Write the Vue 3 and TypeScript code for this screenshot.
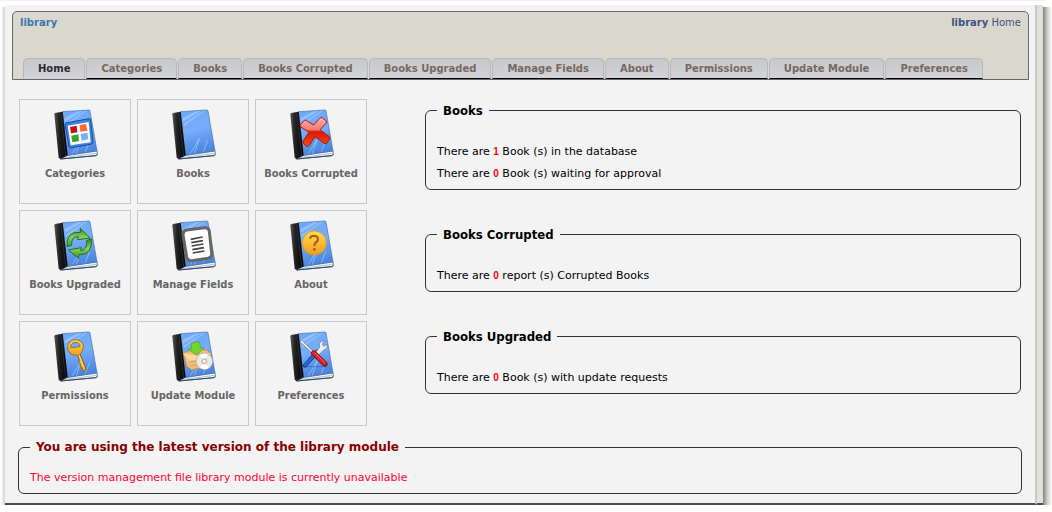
<script setup lang="ts">
interface ModuleItem {
  id: string
  label: string
}
interface StatLine {
  count: number
  text: string
}
interface StatBox {
  title: string
  lines: StatLine[]
}

const items: ModuleItem[] = [
  { id: 'categories', label: 'Categories' },
  { id: 'books', label: 'Books' },
  { id: 'corrupted', label: 'Books Corrupted' },
  { id: 'upgraded', label: 'Books Upgraded' },
  { id: 'fields', label: 'Manage Fields' },
  { id: 'about', label: 'About' },
  { id: 'permissions', label: 'Permissions' },
  { id: 'update', label: 'Update Module' },
  { id: 'preferences', label: 'Preferences' },
]

const tabs: ModuleItem[] = [{ id: 'home', label: 'Home' }, ...items]

const boxes: StatBox[] = [
  {
    title: 'Books',
    lines: [
      { count: 1, text: 'Book (s) in the database' },
      { count: 0, text: 'Book (s) waiting for approval' },
    ],
  },
  { title: 'Books Corrupted', lines: [{ count: 0, text: 'report (s) Corrupted Books' }] },
  { title: 'Books Upgraded', lines: [{ count: 0, text: 'Book (s) with update requests' }] },
]
</script>

<template>
  <div class="top-strip"></div>
  <div class="frame">
    <div class="edge-left"></div>
    <div class="page">
      <header class="head">
        <div class="crumbs">
          <a class="brand" href="#">library</a>
          <span class="trail"><b>library</b> <a href="#">Home</a></span>
        </div>
        <nav class="tabs">
          <a v-for="t in tabs" :key="t.id" href="#" class="tab" :class="{ current: t.id === 'home' }">{{ t.label }}</a>
        </nav>
      </header>

      <main class="main">
        <div class="columns">
          <div class="tiles">
            <a v-for="it in items" :key="it.id" class="tile" href="#">
              <svg class="icon" viewBox="0 0 144 156" aria-hidden="true">
                <defs>
                  <linearGradient :id="'cover-' + it.id" x1="0" y1="0" x2="0.2" y2="1">
                    <stop offset="0" stop-color="#6ba8f8" />
                    <stop offset="0.5" stop-color="#76adfb" />
                    <stop offset="1" stop-color="#4a86e0" />
                  </linearGradient>
                  <linearGradient :id="'spine-' + it.id" x1="0" y1="0" x2="1" y2="0">
                    <stop offset="0" stop-color="#555" />
                    <stop offset="0.35" stop-color="#222" />
                    <stop offset="1" stop-color="#000" />
                  </linearGradient>
                  <linearGradient :id="'mark-' + it.id" x1="0" y1="0" x2="0" y2="1">
                    <template v-if="it.id === 'corrupted'">
                      <stop offset="0" stop-color="#ffb4a8" />
                      <stop offset="0.42" stop-color="#f47a70" />
                      <stop offset="0.5" stop-color="#de1608" />
                      <stop offset="1" stop-color="#f0500c" />
                    </template>
                    <template v-else-if="it.id === 'upgraded'">
                      <stop offset="0" stop-color="#2f8a1c" />
                      <stop offset="0.5" stop-color="#8ccf60" />
                      <stop offset="1" stop-color="#35961f" />
                    </template>
                    <template v-else>
                      <stop offset="0" stop-color="#ffdc50" />
                      <stop offset="1" stop-color="#f39a1c" />
                    </template>
                  </linearGradient>
                </defs>
                <path d="M28 153L50 142L138 128L139 140Q138 143 134 143Z" fill="#f4f6f8" stroke="#445" stroke-width="2" />
                <path d="M40 149L136 136" stroke="#9aa" stroke-width="2" />
                <path d="M30 153L134 143L139 139" fill="none" stroke="#24477c" stroke-width="3" />
                <path d="M34 11L113 6Q117 6 117 9L138 129L49 142Z" :fill="'url(#cover-' + it.id + ')'" stroke="#4470ae" stroke-width="2" />
                <path d="M40 31L80 10L95 9L42 41ZM43 48L102 9L108 8L44 55Z" fill="#fff" opacity="0.25" />
                <path d="M64 137L91 92M76 136L91 92M103 131L116 97" fill="none" stroke="#d8eaff" stroke-width="2" opacity="0.65" />
                <path d="M12 15L35 11L50 142L28 153L23 149L10 19Z" :fill="'url(#spine-' + it.id + ')'" />
                <path d="M29 12L44 144" stroke="#3c3c3c" stroke-width="2" />

                <g v-if="it.id === 'categories'">
                  <path d="M45 45L114 32Q118 32 119 36L126 103Q126 107 122 108L59 120Q55 120 54 116L42 50Q42 46 45 45Z" fill="#3e82df" stroke="#164c9d" stroke-width="3" />
                  <path d="M50 53L113 42L119 103L59 112Z" fill="#f8fbff" />
                  <path d="M57 57L77 53L79 73L60 76Z" fill="#c50d0d" />
                  <path d="M86 51L105 48L109 68L88 71Z" fill="#fa6a30" />
                  <path d="M61 83L82 79L84 99L64 103Z" fill="#3ba626" />
                  <path d="M89 78L109 74L112 94L92 98Z" fill="#73b1f5" />
                </g>
                <g v-else-if="it.id === 'corrupted'">
                  <path d="M50 40Q52 34 58 37L80 51L98 31Q102 26 107 30L117 38Q120 42 117 46L99 65L127 86Q131 90 127 94L119 106Q115 109 111 106L84 86L67 112Q63 117 58 114L49 106Q46 102 49 98L66 73L42 57Q38 53 41 49Z" :fill="'url(#mark-' + it.id + ')'" stroke="#a51a12" stroke-width="3" />
                </g>
                <g v-else-if="it.id === 'upgraded'" :fill="'url(#mark-' + it.id + ')'" stroke="#236f17" stroke-width="3" stroke-linejoin="round">
                  <path d="M48 83Q45 36 88 40L88 28L117 57L80 62L82 53Q60 52 62 79Z" />
                  <path d="M121 59Q126 108 84 107L83 118L52 93L91 86L89 95Q110 93 107 65Z" />
                </g>
                <g v-else-if="it.id === 'fields'">
                  <path d="M53 33L106 26Q119 25 121 37L128 103Q129 116 117 118L68 125Q55 126 53 114L42 48Q41 36 53 33Z" fill="#fff" stroke="#666" stroke-width="9" />
                  <path d="M65 61L101 54M67 71L102 65M68 81L103 75M70 92L105 86M71 102L106 96" stroke="#444" stroke-width="5" />
                </g>
                <g v-else-if="it.id === 'about'">
                  <circle cx="82" cy="72" r="36" :fill="'url(#mark-' + it.id + ')'" stroke="#e29415" stroke-width="2" />
                  <path d="M69 59Q70 50 81 50Q93 51 93 61Q93 67 86 71Q82 74 82 81" fill="none" stroke="#a75a13" stroke-width="6" />
                  <circle cx="82" cy="91" r="4" fill="#a75a13" />
                </g>
                <g v-else-if="it.id === 'permissions'">
                  <path d="M79 70L85 67L105 117L101 124L94 119L92 111L87 108L88 101L83 97L85 91Z" fill="#f6b11c" stroke="#8d651c" stroke-width="3" />
                  <path fill-rule="evenodd" d="M73 29C88 29 98 40 97 52Q96 69 83 76L75 76Q51 74 50 52C50 39 60 30 73 29ZM73 37C63 38 57 45 59 53L87 50C88 41 81 37 73 37Z" :fill="'url(#mark-' + it.id + ')'" stroke="#95702c" stroke-width="3" />
                  <path d="M84 75L98 112" stroke="#ffe58b" stroke-width="3" />
                </g>
                <g v-else-if="it.id === 'update'">
                  <path d="M42 69L74 57L113 60L126 72L112 111L67 119L53 109Z" fill="#f2bd77" stroke="#c57a2d" stroke-width="2" />
                  <path d="M42 69L83 77L126 69L118 85L60 92Z" fill="#ffdaa1" />
                  <path d="M60 96L108 89M64 107L107 101" stroke="#dda363" stroke-width="3" />
                  <path d="M66 39L92 35L94 53L105 53L84 75L57 58L68 56Z" fill="#72d332" stroke="#48a426" stroke-width="2" />
                  <circle cx="106" cy="94" r="25" fill="#e8e9e8" stroke="#a6a6a6" stroke-width="2" />
                  <path d="M106 94L91 76Q104 67 116 73ZM106 94L119 114Q105 121 94 112Z" fill="#fff" />
                  <circle cx="106" cy="94" r="9" fill="#d1c1ae" />
                  <circle cx="106" cy="94" r="4" fill="#fff" />
                </g>
                <g v-else-if="it.id === 'preferences'" stroke-linecap="round">
                  <path d="M50 110L118 110" stroke="#2a62b8" stroke-width="2" />
                  <path d="M92 64L54 106" stroke="#133f88" stroke-width="13" />
                  <path d="M78 80L54 105" stroke="#286dd0" stroke-width="8" />
                  <path d="M82 71L98 52Q94 37 106 33L112 34L106 42L110 49L120 43Q124 55 109 61L91 79Z" fill="#e9edf0" stroke="#6d7580" stroke-width="2" />
                  <path d="M43 34L76 66" stroke="#69717a" stroke-width="8" />
                  <path d="M43 34L76 66" stroke="#f5f5f5" stroke-width="5" />
                  <path d="M80 69L114 102" stroke="#8f1018" stroke-width="16" />
                  <path d="M80 69L113 100" stroke="#dc242c" stroke-width="11" />
                  <path d="M84 69L112 96" stroke="#ff9191" stroke-width="2" />
                </g>
              </svg>
              <span class="tile-label">{{ it.label }}</span>
            </a>
          </div>

          <div class="stats">
            <fieldset v-for="b in boxes" :key="b.title" class="box">
              <legend>{{ b.title }}</legend>
              <div v-for="l in b.lines" :key="l.text" class="line">There are <span class="count">{{ l.count }}</span> {{ l.text }}</div>
            </fieldset>
          </div>
        </div>

        <fieldset class="box version">
          <legend>You are using the latest version of the library module</legend>
          <div class="line">The version management file library module is currently unavailable</div>
        </fieldset>
      </main>
    </div>
    <div class="edge-right"></div>
    <div class="shadow-right"></div>
  </div>
</template>

<style>
body {
  margin: 0;
  background: #fff;
}
</style>

<style scoped>
.top-strip {
  height: 1px;
  margin-right: 6px;
  background: #f3f3f3;
}
.frame {
  display: flex;
  margin-top: 4px;
  font-family: "DejaVu Sans", Verdana, sans-serif;
  font-size: 11px;
}
.edge-left {
  width: 5px;
  margin-top: 2px;
  background: linear-gradient(to right, #fff 20%, #d0d0d0);
}
.page {
  flex: 1;
  min-width: 0;
  padding: 6px 6px 9px 7px;
  background: #f3f3f3;
  border-right: 2px solid #c8c8c8;
  border-bottom: 2px solid #4c4c4c;
}
.edge-right {
  width: 6px;
  background: #e3e0d6;
  border-bottom: 2px solid #4c4c4c;
}
.shadow-right {
  width: 9px;
  margin-top: 2px;
  background: linear-gradient(to right, #808080, #d0d0d0 50%, #fff);
}
a {
  color: inherit;
  text-decoration: none;
}
.head {
  display: flex;
  flex-direction: column;
  justify-content: space-between;
  min-height: 67px;
  border: 1px solid #666;
  border-radius: 5px 5px 0 0;
  background: #dad7cf;
}
.crumbs {
  display: flex;
  justify-content: space-between;
  padding: 4px 7px 0;
  font-size: 10px;
  line-height: 14px;
}
.brand {
  font-weight: bold;
  color: #3c75a8;
}
.trail {
  color: #3b5580;
}
.tabs {
  display: flex;
  gap: 1px;
  padding: 0 10px;
}
.tab {
  padding: 0 14px;
  border: 1px solid #b8b8b8;
  border-bottom-color: #000;
  border-radius: 5px 5px 0 0;
  background: linear-gradient(#c8c9cc, #d2d3d8);
  font-size: 10px;
  font-weight: bold;
  line-height: 19px;
  white-space: nowrap;
  color: #776860;
}
.tab.current {
  border-bottom-color: #d2d3d8;
  color: #2b2b33;
}
.main {
  padding: 19px 7px 0 6px;
}
.columns {
  display: grid;
  grid-template-columns: 348px 1fr;
  gap: 58px;
  padding: 0 1px;
}
.tiles {
  display: grid;
  grid-template-columns: repeat(3, 1fr);
  gap: 6px;
}
.tile {
  display: flex;
  flex-direction: column;
  align-items: center;
  gap: 7px;
  padding: 8px 0 22px;
  border: 1px solid #c8c8c8;
  color: #666;
}
.icon {
  width: 48px;
  height: 52px;
}
.tile-label {
  font-family: "DejaVu Sans Condensed", "DejaVu Sans", Tahoma, sans-serif;
  font-weight: bold;
  line-height: 14px;
  white-space: nowrap;
}
.stats {
  display: flex;
  flex-direction: column;
  gap: 36px;
  padding-top: 3px;
}
.box {
  min-width: 0;
  margin: 0;
  padding: 22px 11px 4px;
  border: 1px solid #333;
  border-radius: 6px;
  color: #000;
}
.box legend {
  padding: 0 6px;
  font-family: "DejaVu Sans Condensed", "DejaVu Sans", Tahoma, sans-serif;
  font-size: 13px;
  font-weight: bold;
  line-height: 17px;
}
.line {
  line-height: 22px;
}
.count {
  font-family: "Liberation Sans", Arial, sans-serif;
  font-size: 10px;
  font-weight: bold;
  color: #f00;
}
.box.version {
  margin-top: 13px;
  padding-top: 11px;
  color: #ff0033;
}
.version legend {
  font-family: "DejaVu Sans", Verdana, sans-serif;
  font-size: 12px;
  color: #8b0000;
}
</style>
